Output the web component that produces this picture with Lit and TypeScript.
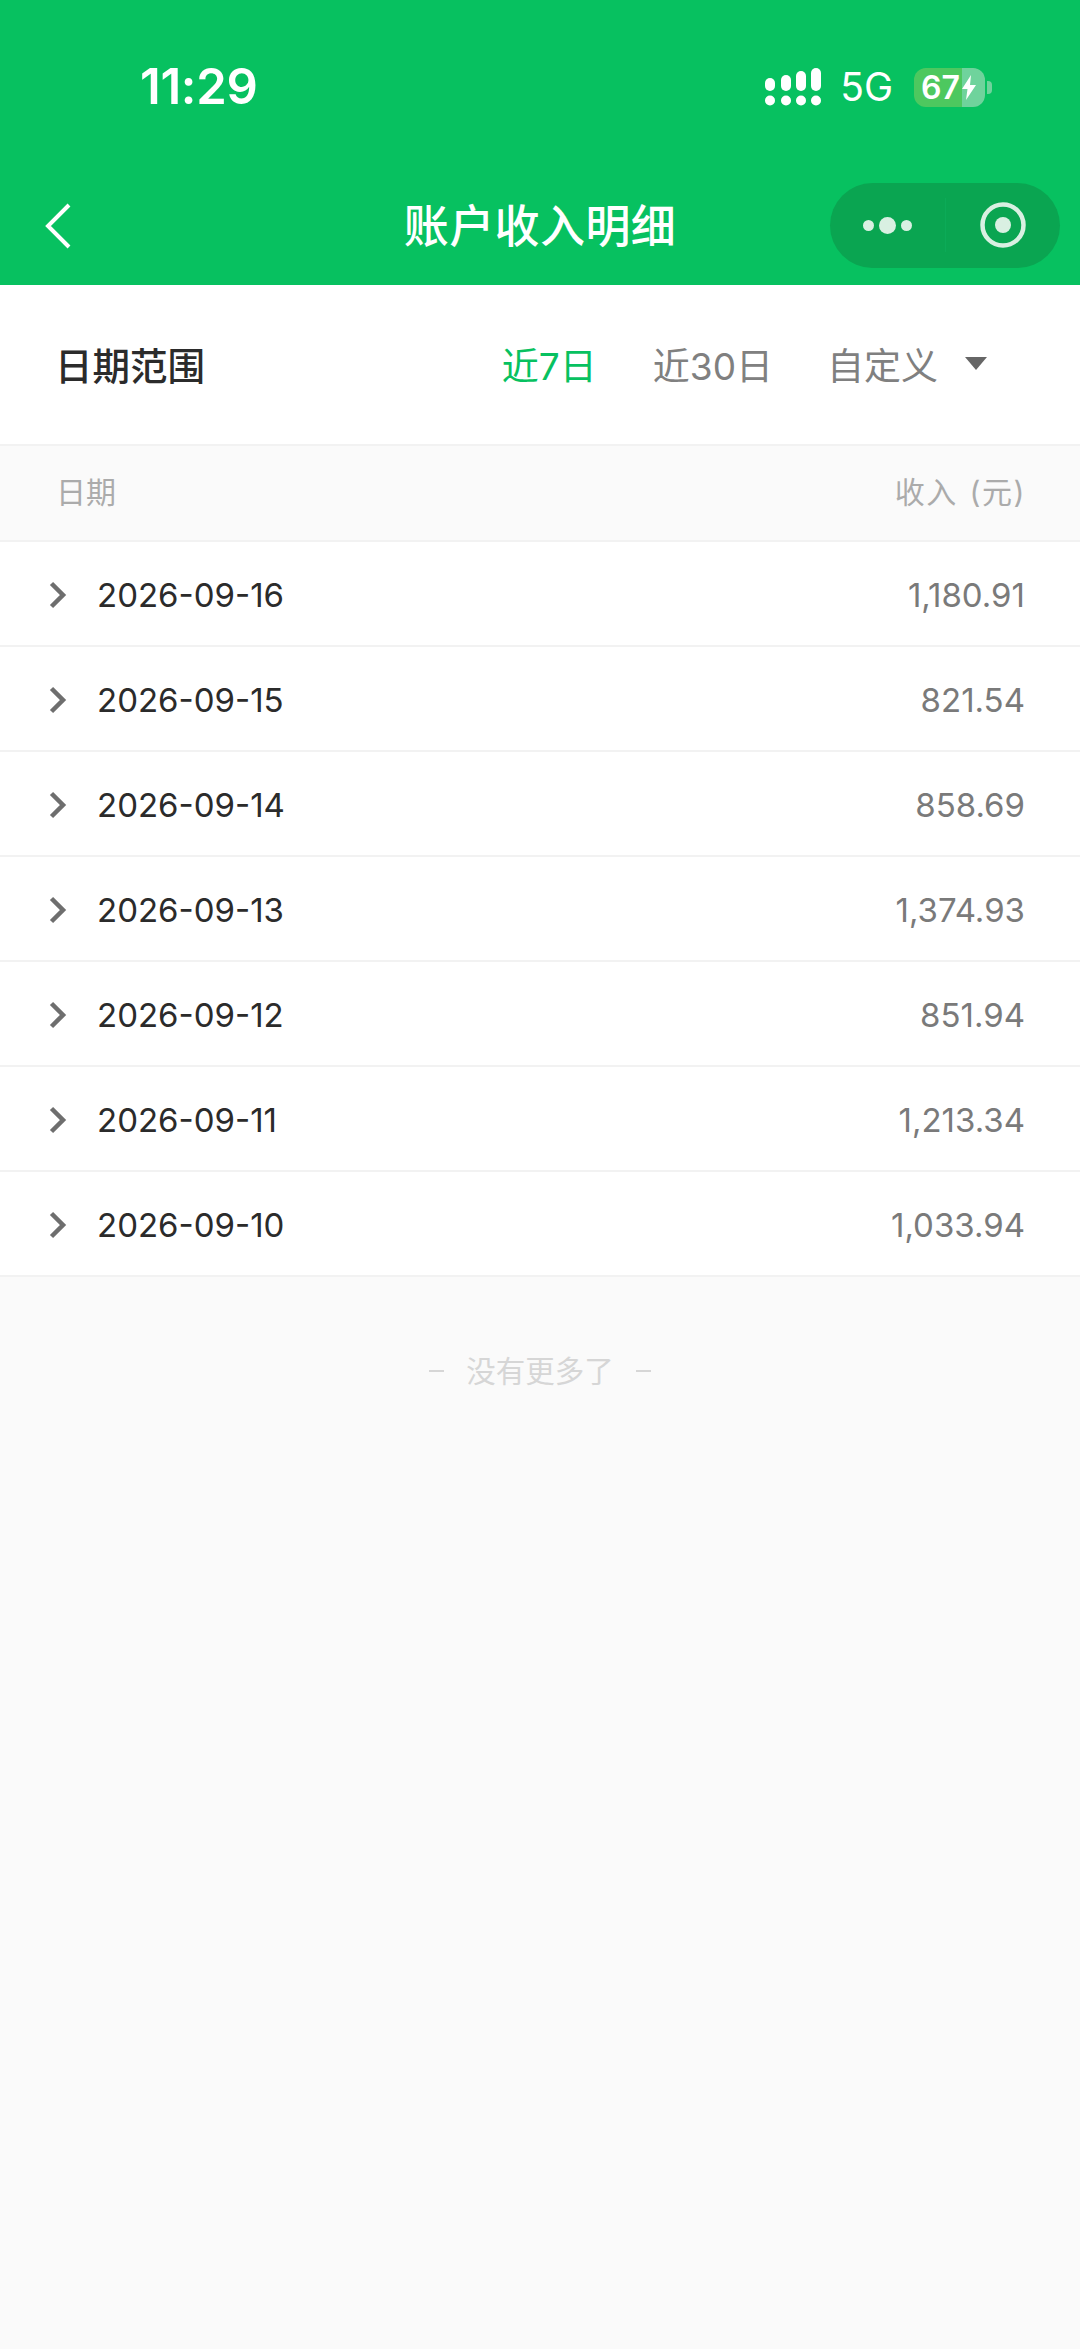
import { LitElement, html, css, svg } from 'lit'
import { customElement } from 'lit/decorators.js'

const rows = [
  { date: '2026-09-16', amount: '1,180.91' },
  { date: '2026-09-15', amount: '821.54' },
  { date: '2026-09-14', amount: '858.69' },
  { date: '2026-09-13', amount: '1,374.93' },
  { date: '2026-09-12', amount: '851.94' },
  { date: '2026-09-11', amount: '1,213.34' },
  { date: '2026-09-10', amount: '1,033.94' },
]

const signal = svg`
  <rect x="0" y="10" width="10" height="13" rx="5" />
  <rect x="16" y="7" width="10" height="16" rx="5" />
  <rect x="31" y="3" width="10" height="20" rx="5" />
  <rect x="46" y="0" width="10" height="23" rx="5" />
  <circle cx="5" cy="32.500" r="5" />
  <circle cx="21" cy="32.500" r="5" />
  <circle cx="36" cy="32.500" r="5" />
  <circle cx="51" cy="32.500" r="5" />
`

@customElement('app-root')
export class AppRoot extends LitElement {
  static styles = css`
    :host {
      display: block;
      width: 1080px;
      min-height: 2349px;
      background: #fafafa;
      font-family: 'Inter', 'Noto Sans CJK SC', sans-serif;
    }
    .header {
      height: 285px;
      background: #07c160;
      color: #fff;
      display: flex;
      flex-direction: column;
    }
    .status {
      height: 150px;
      display: flex;
      align-items: flex-start;
      padding: 60px 88px 0 140px;
      box-sizing: border-box;
    }
    .time {
      font-size: 49px;
      font-weight: 600;
      line-height: 54px;
      letter-spacing: -0.3px;
    }
    .status-right {
      margin-left: auto;
      display: flex;
      align-items: center;
      height: 54px;
    }
    .signal {
      width: 56px;
      height: 38px;
      fill: #fff;
      margin-right: 19px;
    }
    .net {
      font-size: 39px;
      line-height: 54px;
      margin-right: 21px;
    }
    .battery {
      display: flex;
      align-items: center;
      gap: 2px;
    }
    .battery-body {
      width: 71px;
      height: 39px;
      border-radius: 12px;
      background: linear-gradient(90deg, #4dc85f 0 67%, #6fd39c 67% 100%);
      display: flex;
      align-items: center;
      padding-left: 7px;
      box-sizing: border-box;
      font-size: 32px;
      font-weight: 600;
      line-height: 39px;
    }
    .bolt {
      width: 16px;
      height: 25px;
      fill: #fff;
      margin-left: 1px;
    }
    .nub {
      width: 5px;
      height: 13px;
      border-radius: 0 4px 4px 0;
      background: #6fd39c;
    }
    .nav {
      flex: 1;
      display: grid;
      grid-template-columns: 1fr auto 1fr;
      align-items: center;
      padding-top: 17px;
    }
    .back {
      width: 26px;
      height: 46px;
      margin-left: 45px;
      fill: none;
      stroke: #fff;
      stroke-width: 4;
    }
    .title {
      font-size: 45px;
      font-weight: 500;
      line-height: 60px;
      letter-spacing: 0.4px;
      margin-top: 2px;
    }
    .capsule {
      justify-self: end;
      width: 230px;
      height: 85px;
      margin: -2px 20px 0 0;
      border-radius: 43px;
      background: #0aa551;
      display: flex;
      align-items: center;
    }
    .capsule-half {
      flex: 1;
      display: flex;
      align-items: center;
      justify-content: center;
    }
    .capsule-half + .capsule-half {
      border-left: 1px solid #0cab58;
      height: 54px;
    }
    .dots {
      width: 49px;
      height: 17px;
      fill: #d9f0e2;
    }
    .target {
      width: 46px;
      height: 46px;
    }
    .filter {
      height: 159px;
      background: #fff;
      display: flex;
      align-items: center;
      padding: 0 93px 2px 55px;
      box-sizing: border-box;
    }
    .filter-label {
      font-size: 37.5px;
      color: #2b2b2b;
      font-weight: 500;
      margin-right: auto;
    }
    .tab {
      font-size: 37px;
      color: #808080;
      margin-left: 57px;
      display: flex;
      align-items: center;
    }
    .tab.active {
      color: #07c160;
    }
    .tab.middle {
      margin-left: 56px;
    }
    .tab.custom {
      margin-left: 54px;
    }
    .caret {
      width: 22px;
      height: 13px;
      fill: #666;
      margin-left: 27px;
    }
    .table-head {
      height: 98px;
      background: #fafafa;
      border-top: 2px solid #f2f2f2;
      border-bottom: 2px solid #f2f2f2;
      box-sizing: border-box;
      display: flex;
      align-items: center;
      justify-content: space-between;
      padding: 0 55px 6px 56px;
      font-size: 30px;
      color: #ababab;
    }
    .income {
      letter-spacing: 1.5px;
      word-spacing: 2px;
      margin-right: -1px;
    }
    .row {
      height: 105px;
      background: #fff;
      border-bottom: 2px solid #f2f2f2;
      box-sizing: border-box;
      display: flex;
      align-items: center;
      padding: 2px 55px 0 49px;
    }
    .chevron {
      width: 18px;
      height: 28px;
      fill: none;
      stroke: #6e6e6e;
      stroke-width: 4.500;
      margin-right: 30px;
    }
    .date {
      font-size: 33px;
      color: #2b2b2b;
    }
    .amount {
      margin-left: auto;
      font-size: 33px;
      color: #7a7a7a;
    }
    .end {
      display: flex;
      justify-content: center;
      align-items: center;
      padding-top: 74px;
      font-size: 29.5px;
      line-height: 40px;
      color: #d6d6d6;
      gap: 22px;
    }
    .end-dash {
      width: 15px;
      height: 2px;
      background: #d6d6d6;
    }
  `

  render() {
    return html`
      <div class="header">
        <div class="status">
          <span class="time">11:29</span>
          <div class="status-right">
            <svg class="signal" viewBox="0 0 56 38">${signal}</svg>
            <span class="net">5G</span>
            <div class="battery">
              <div class="battery-body">
                67<svg class="bolt" viewBox="0 0 16 25"><path d="M10 0 1 14h5.500L5 25l10-15H9z" /></svg>
              </div>
              <span class="nub"></span>
            </div>
          </div>
        </div>
        <div class="nav">
          <svg class="back" viewBox="0 0 26 46"><path d="M24 2 3 23l21 21" /></svg>
          <span class="title">账户收入明细</span>
          <div class="capsule">
            <div class="capsule-half">
              <svg class="dots" viewBox="0 0 49 17">
                <circle cx="5.500" cy="8.500" r="5.500" /><circle cx="24.500" cy="8.500" r="8.500" /><circle cx="43.500" cy="8.500" r="5.500" />
              </svg>
            </div>
            <div class="capsule-half">
              <svg class="target" viewBox="0 0 46 46">
                <circle cx="23" cy="23" r="20.500" fill="none" stroke="#d9f0e2" stroke-width="4.500" />
                <circle cx="23" cy="23" r="8" fill="#d9f0e2" />
              </svg>
            </div>
          </div>
        </div>
      </div>

      <div class="filter">
        <span class="filter-label">日期范围</span>
        <span class="tab active">近7日</span>
        <span class="tab middle">近30日</span>
        <span class="tab custom">自定义<svg class="caret" viewBox="0 0 22 13"><path d="M0 0h22L11 13z" /></svg></span>
      </div>

      <div class="table-head">
        <span>日期</span>
        <span class="income">收入 (元)</span>
      </div>

      ${rows.map(
        (r) => html`
          <div class="row">
            <svg class="chevron" viewBox="0 0 18 28"><path d="M2.500 2.500 14 14 2.500 25.500" /></svg>
            <span class="date">${r.date}</span>
            <span class="amount">${r.amount}</span>
          </div>
        `
      )}

      <div class="end">
        <span class="end-dash"></span>
        <span>没有更多了</span>
        <span class="end-dash"></span>
      </div>
    `
  }
}
